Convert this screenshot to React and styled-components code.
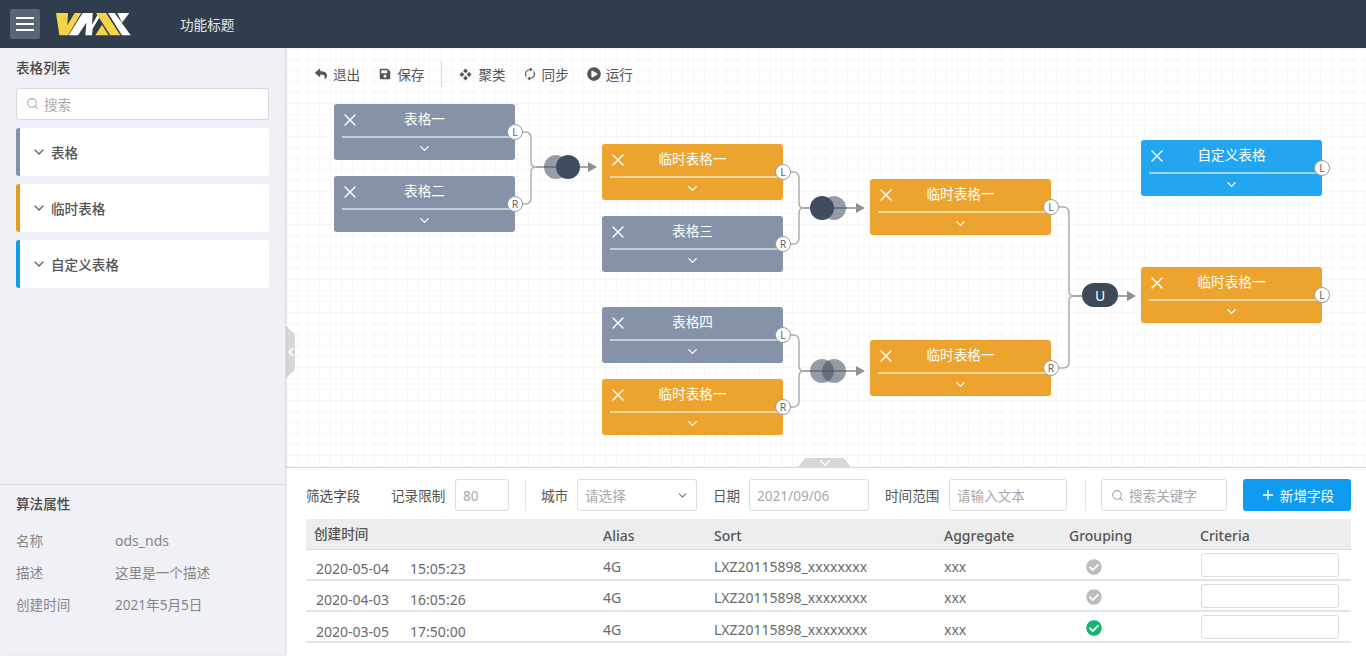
import React from 'react';
import styled, { createGlobalStyle } from 'styled-components';
import { ChevronDown, ChevronLeft, Plus, Search, X } from 'lucide-react';
import { FaCheckCircle, FaPlayCircle, FaReply, FaSave } from 'react-icons/fa';

const GlobalStyle = createGlobalStyle`
  html, body {
    margin: 0;
    padding: 0;
    background: #fff;
  }
  * {
    box-sizing: border-box;
  }
  body, input {
    font-family: 'Noto Sans', 'Noto Sans CJK SC', sans-serif;
    font-size: 13.6px;
    color: #555;
  }
`;

const Page = styled.div`
  width: 1366px;
  height: 656px;
  display: flex;
  flex-direction: column;
  overflow: hidden;
`;

/* top bar */
const TopBar = styled.header`
  height: 48px;
  flex: none;
  display: flex;
  align-items: center;
  padding-left: 10px;
  background-color: #303d4c;
  color: #fff;
`;

const MenuButton = styled.div`
  width: 30px;
  height: 30px;
  display: flex;
  flex-direction: column;
  align-items: center;
  justify-content: center;
  gap: 4px;
  border-radius: 2px;
  background-color: #5a6572;
  span {
    width: 18px;
    height: 2px;
    background-color: #fff;
  }
`;

const LogoSvg = styled.svg`
  width: 75px;
  height: 24px;
  margin-left: 16px;
`;

const PageTitle = styled.div`
  margin-left: 49px;
  color: #e8eaec;
`;

const Body = styled.div`
  flex: 1;
  display: flex;
  min-height: 0;
`;

/* left column */
const Sidebar = styled.aside`
  width: 286px;
  height: 606px;
  flex: none;
  display: flex;
  flex-direction: column;
  background-color: #f0f1f6;
  border-right: 1px solid #dedede;
  box-shadow: 0 1px 3px rgba(0, 0, 0, 0.14);
  z-index: 2;
`;

const TableList = styled.div`
  flex: 1;
  padding: 10px 16px 0;
`;

const SectionTitle = styled.div`
  height: 20px;
  line-height: 20px;
  font-weight: 500;
  color: #4a4a4a;
`;

const SideSearch = styled.div`
  height: 32px;
  margin: 10px 0 8px;
  display: flex;
  align-items: center;
  gap: 5px;
  padding: 0 0 1px 9px;
  background-color: #fff;
  border: 1px solid #d9d9d9;
  border-radius: 3px;
  color: #aaa;
`;

const Group = styled.div`
  height: 48px;
  margin-bottom: 8px;
  display: flex;
  align-items: center;
  gap: 4px;
  padding-left: 11px;
  background-color: #fff;
  border-left: 4px solid ${(p) => p.$color};
  border-radius: 3px;
  font-weight: 500;
  color: #555;
  svg {
    color: #666;
  }
`;

const Props = styled.div`
  height: 170px;
  flex: none;
  padding: 9px 16px 0;
  border-top: 1px solid #dcdcdc;
`;

const PropList = styled.div`
  margin-top: 10px;
`;

const PropRow = styled.div`
  height: 32px;
  display: flex;
  align-items: center;
  color: #868686;
`;

const PropName = styled.div`
  width: 99px;
`;

const LatinValue = styled.span`
  font-size: 14px;
`;

/* right column */
const Main = styled.main`
  flex: 1;
  min-width: 0;
  display: flex;
  flex-direction: column;
`;

const Canvas = styled.section`
  position: relative;
  height: 420px;
  flex: none;
  padding: 13px 0 0 29px;
  background-color: #fff;
  background-image:
    linear-gradient(#f7f7f8 1px, transparent 1px),
    linear-gradient(90deg, #f7f7f8 1px, transparent 1px);
  background-size: 11px 11px;
  border-bottom: 1px solid #dadada;
`;

const Toolbar = styled.div`
  display: flex;
  align-items: center;
  height: 26px;
  color: #555;
`;

const ToolButton = styled.div`
  display: flex;
  align-items: center;
  gap: ${(p) => p.$space || 6}px;
  margin-right: ${(p) => p.$gap}px;
  svg {
    color: #555;
    flex: none;
  }
`;

const ToolDivider = styled.div`
  width: 1px;
  height: 26px;
  margin-right: 17px;
  background-color: #dcdcdc;
`;

const Wires = styled.svg`
  position: absolute;
  left: 0;
  top: 0;
  width: 1080px;
  height: 419px;
  pointer-events: none;
`;

const NodeBox = styled.div`
  position: absolute;
  left: ${(p) => p.$x}px;
  top: ${(p) => p.$y}px;
  width: 181px;
  height: 56px;
  display: flex;
  flex-direction: column;
  background-color: ${(p) => p.$color};
  border-radius: 3px;
  color: #fff;
`;

const NodeHead = styled.div`
  position: relative;
  height: 34px;
  flex: none;
  margin-left: 8px;
  border-bottom: 2px solid rgba(255, 255, 255, 0.55);
  text-align: center;
  padding: 4px 8px 0 0;
  line-height: 22px;
`;

const NodeClose = styled(X)`
  position: absolute;
  left: -2px;
  top: 6px;
`;

const NodeFoot = styled.div`
  flex: 1;
  display: flex;
  align-items: center;
  justify-content: center;
  padding-bottom: 2px;
`;

const Port = styled.div`
  position: absolute;
  right: -8px;
  top: 20px;
  width: 16px;
  height: 16px;
  display: flex;
  align-items: center;
  justify-content: center;
  background-color: #fff;
  border: 1px solid #9a9a9a;
  border-radius: 50%;
  font-size: 10.5px;
  color: #666;
`;

const UnionPill = styled.div`
  position: absolute;
  left: 796px;
  top: 235px;
  width: 36px;
  height: 24px;
  display: flex;
  align-items: center;
  justify-content: center;
  background-color: #3b4959;
  border-radius: 12px;
  font-size: 14px;
  color: #fff;
`;

const SideHandle = styled.div`
  position: absolute;
  left: 0;
  top: 278px;
  width: 9px;
  height: 52px;
  display: flex;
  align-items: center;
  justify-content: center;
  background-color: #d8d8d8;
  clip-path: polygon(0 0, 100% 16%, 100% 84%, 0 100%);
  color: #fff;
  svg {
    flex: none;
  }
`;

const BottomHandle = styled.div`
  position: absolute;
  left: 512px;
  bottom: 0;
  width: 53px;
  height: 9px;
  display: flex;
  align-items: center;
  justify-content: center;
  background-color: #d8d8d8;
  clip-path: polygon(0 100%, 14% 0, 86% 0, 100% 100%);
  color: #fff;
`;

/* field panel */
const Panel = styled.section`
  flex: 1;
  padding: 11px 15px 0 20px;
  background-color: #fff;
`;

const FilterBar = styled.div`
  display: flex;
  align-items: center;
  height: 32px;
`;

const FilterTitle = styled.div`
  width: 85px;
  flex: none;
  color: #4a4a4a;
`;

const FilterLabel = styled.label`
  width: ${(p) => p.$w}px;
  flex: none;
  white-space: nowrap;
  color: #555;
`;

const Field = styled.input`
  width: ${(p) => p.$w}px;
  height: 32px;
  flex: none;
  padding: 0 7px;
  margin-right: ${(p) => p.$gap || 0}px;
  border: 1px solid #dcdcdc;
  border-radius: 3px;
  outline: none;
  &::placeholder {
    color: #a8a8a8;
    opacity: 1;
  }
`;

const SelectBox = styled.div`
  width: 120px;
  height: 32px;
  flex: none;
  margin-right: 16px;
  display: flex;
  align-items: center;
  justify-content: space-between;
  padding: 0 7px;
  border: 1px solid #dcdcdc;
  border-radius: 3px;
  color: #a8a8a8;
  svg {
    color: #777;
  }
`;

const FilterDivider = styled.div`
  width: 1px;
  height: 32px;
  flex: none;
  margin: 0 15px 0 16px;
  background-color: #e6e6e6;
`;

const SearchBox = styled.div`
  width: 126px;
  height: 32px;
  flex: none;
  margin-right: 16px;
  display: flex;
  align-items: center;
  gap: 5px;
  padding-left: 9px;
  border: 1px solid #dcdcdc;
  border-radius: 3px;
  color: #a8a8a8;
`;

const AddButton = styled.div`
  width: 108px;
  height: 32px;
  flex: none;
  display: flex;
  align-items: center;
  justify-content: center;
  gap: 4px;
  background-color: #0e9bf0;
  border-radius: 3px;
  color: #fff;
`;

const Grid = styled.div`
  margin-top: 8px;
`;

const columns = '289px 111px 230px 125px 131px 159px';

const HeadRow = styled.div`
  display: grid;
  grid-template-columns: ${columns};
  height: 31px;
  align-items: center;
  background-color: #ededed;
  border-bottom: 1px solid #dcdcdc;
  font-size: 14px;
  font-weight: 500;
  color: #555;
  > div {
    padding: 2px 0 0 8px;
  }
  > div:first-child {
    padding-top: 0;
    margin-top: -2px;
    font-size: 13.6px;
  }
`;

const Row = styled.div`
  display: grid;
  grid-template-columns: ${columns};
  height: 31px;
  align-items: center;
  border-bottom: 2px solid #e4e4e4;
  font-size: 14px;
  color: #6a6a6a;
`;

const TextCell = styled.div`
  padding: ${(p) => p.$top}px 0 0 8px;
`;

const DateCell = styled.div`
  display: flex;
  gap: 21px;
  padding: ${(p) => p.$top}px 0 0 10px;
`;

const CheckCell = styled.div`
  display: flex;
  padding: ${(p) => p.$top}px 0 0 25px;
  color: ${(p) => (p.$on ? '#12b76f' : '#bdbdbd')};
`;

const CriteriaCell = styled.div`
  padding-left: 9px;
`;

const CriteriaInput = styled.input`
  display: block;
  width: 138px;
  height: 24px;
  border: 1px solid #dcdcdc;
  border-radius: 3px;
  outline: none;
`;

const GRAY = '#8592a8';
const ORANGE = '#eda42e';
const BLUE = '#23a6f0';

const nodes = [
  { x: 48, y: 56, title: '表格一', color: GRAY, port: 'L' },
  { x: 48, y: 128, title: '表格二', color: GRAY, port: 'R' },
  { x: 316, y: 96, title: '临时表格一', color: ORANGE, port: 'L' },
  { x: 316, y: 168, title: '表格三', color: GRAY, port: 'R' },
  { x: 316, y: 259, title: '表格四', color: GRAY, port: 'L' },
  { x: 316, y: 331, title: '临时表格一', color: ORANGE, port: 'R' },
  { x: 584, y: 131, title: '临时表格一', color: ORANGE, port: 'L' },
  { x: 584, y: 292, title: '临时表格一', color: ORANGE, port: 'R' },
  { x: 855, y: 92, title: '自定义表格', color: BLUE, port: 'L' },
  { x: 855, y: 219, title: '临时表格一', color: ORANGE, port: 'L' },
];

// text sits a little lower in each row of the original, hence the per-row tops
const rows = [
  { date: '2020-05-04', time: '15:05:23', on: false, textTop: 4, dateTop: 8, checkTop: 5 },
  { date: '2020-04-03', time: '16:05:26', on: false, textTop: 4, dateTop: 8, checkTop: 2 },
  { date: '2020-03-05', time: '17:50:00', on: true, textTop: 6, dateTop: 9, checkTop: 2 },
];

const Node = ({ x, y, title, color, port }) => (
  <NodeBox $x={x} $y={y} $color={color}>
    <NodeHead>
      <NodeClose size={20} strokeWidth={1.6} />
      {title}
    </NodeHead>
    <NodeFoot>
      <ChevronDown size={15} strokeWidth={2} />
    </NodeFoot>
    <Port>{port}</Port>
  </NodeBox>
);

// two outputs joined into one arrow, in canvas coordinates
const Join = ({ x, top, bottom, mid, end, reach = 10 }) => (
  <g fill="none">
    <path
      d={`M${x} ${top} h${reach} q6 0 6 6 V${mid - 5} q0 5 5 5 M${x} ${bottom} h${reach} q6 0 6 -6 V${mid + 5} q0 -5 5 -5`}
      stroke="#aeaeae"
      strokeWidth="1.5"
    />
    <path d={`M${x + reach + 11} ${mid} H${end - 8}`} stroke="#8a8a8a" strokeWidth="1.5" />
    <path d={`M${end - 9} ${mid - 5} L${end} ${mid} L${end - 9} ${mid + 5} Z`} fill="#8f8f8f" />
  </g>
);

const ClusterIcon = () => (
  <svg width="13" height="13" viewBox="0 0 14 14" fill="#555">
    <path d="M7 0.5 L9.6 3.1 L7 5.7 L4.4 3.1 Z" />
    <path d="M7 8.3 L9.6 10.9 L7 13.5 L4.4 10.9 Z" />
    <path d="M3.1 4.4 L5.7 7 L3.1 9.6 L0.5 7 Z" />
    <path d="M10.9 4.4 L13.5 7 L10.9 9.6 L8.3 7 Z" />
  </svg>
);

const SyncIcon = () => (
  <svg width="12" height="14" viewBox="0 0 12 14">
    <path d="M6 2.5 A4.5 4.5 0 0 0 2.4 9.7 M6 11.5 A4.5 4.5 0 0 0 9.6 4.3" fill="none" stroke="#555" strokeWidth="1.2" />
    <path d="M6 0.4 L8.8 2.5 L6 4.6 Z M6 9.4 L3.2 11.5 L6 13.6 Z" fill="#555" />
  </svg>
);

const Logo = () => (
  <LogoSvg viewBox="12 10 225 72">
    <path d="M12 13 H48 L46 50 L68 13 H88 L48 80 H22 Z" fill="#f4d44a" />
    <path d="M50 80 L92 13 H122 L120 48 L140 13 H150 L122 60 L120 80 H100 L103 42 L78 80 Z" fill="#fff" />
    <path d="M130 80 L150 48 L165 72 L170 80 Z" fill="#f4d44a" />
    <path d="M132 13 H162 L205 80 H175 Z" fill="#f4d44a" />
    <path d="M168 13 H188 L236 80 H210 Z" fill="#fff" />
    <path d="M196 13 H232 L210 42 Z" fill="#fff" />
  </LogoSvg>
);

const App = () => (
  <Page>
    <GlobalStyle />
    <TopBar>
      <MenuButton>
        <span />
        <span />
        <span />
      </MenuButton>
      <Logo />
      <PageTitle>功能标题</PageTitle>
    </TopBar>
    <Body>
      <Sidebar>
        <TableList>
          <SectionTitle>表格列表</SectionTitle>
          <SideSearch>
            <Search size={13} />
            搜索
          </SideSearch>
          <Group $color={GRAY}>
            <ChevronDown size={16} />
            表格
          </Group>
          <Group $color="#ea9a1e">
            <ChevronDown size={16} />
            临时表格
          </Group>
          <Group $color="#0e9bf0">
            <ChevronDown size={16} />
            自定义表格
          </Group>
        </TableList>
        <Props>
          <SectionTitle>算法属性</SectionTitle>
          <PropList>
            <PropRow>
              <PropName>名称</PropName>
              <LatinValue>ods_nds</LatinValue>
            </PropRow>
            <PropRow>
              <PropName>描述</PropName>
              这里是一个描述
            </PropRow>
            <PropRow>
              <PropName>创建时间</PropName>
              2021年5月5日
            </PropRow>
          </PropList>
        </Props>
      </Sidebar>
      <Main>
        <Canvas>
          <Toolbar>
            <ToolButton $gap={19}>
              <FaReply size={12} />
              退出
            </ToolButton>
            <ToolButton $gap={17}>
              <FaSave size={12} />
              保存
            </ToolButton>
            <ToolDivider />
            <ToolButton $gap={18}>
              <ClusterIcon />
              聚类
            </ToolButton>
            <ToolButton $gap={18}>
              <SyncIcon />
              同步
            </ToolButton>
            <ToolButton $gap={0} $space={5}>
              <FaPlayCircle size={14} />
              运行
            </ToolButton>
          </Toolbar>
          <Wires viewBox="0 0 1080 419">
            <Join x={229} top={84} bottom={156} mid={119} end={311} />
            <circle cx="270" cy="119" r="12" fill="#3f4d5e" opacity="0.55" />
            <circle cx="282" cy="119" r="12" fill="#3f4d5e" />
            <Join x={497} top={124} bottom={196} mid={160} end={579} />
            <circle cx="548" cy="160" r="12" fill="#3f4d5e" opacity="0.55" />
            <circle cx="536" cy="160" r="12" fill="#3f4d5e" />
            <Join x={497} top={287} bottom={359} mid={323} end={579} />
            <circle cx="536" cy="323" r="12" fill="#3f4d5e" opacity="0.55" />
            <circle cx="548" cy="323" r="12" fill="#3f4d5e" opacity="0.55" />
            <Join x={765} top={159} bottom={320} mid={248} end={850} reach={12} />
          </Wires>
          {nodes.map((n) => (
            <Node key={`${n.x}-${n.y}`} {...n} />
          ))}
          <UnionPill>U</UnionPill>
          <SideHandle>
            <ChevronLeft size={14} strokeWidth={3} />
          </SideHandle>
          <BottomHandle>
            <ChevronDown size={18} strokeWidth={2} />
          </BottomHandle>
        </Canvas>
        <Panel>
          <FilterBar>
            <FilterTitle>筛选字段</FilterTitle>
            <FilterLabel $w={64}>记录限制</FilterLabel>
            <Field $w={54} placeholder="80" />
            <FilterDivider />
            <FilterLabel $w={36}>城市</FilterLabel>
            <SelectBox>
              请选择
              <ChevronDown size={13} />
            </SelectBox>
            <FilterLabel $w={36}>日期</FilterLabel>
            <Field $w={120} $gap={16} placeholder="2021/09/06" />
            <FilterLabel $w={64}>时间范围</FilterLabel>
            <Field $w={118} $gap={2} placeholder="请输入文本" />
            <FilterDivider />
            <SearchBox>
              <Search size={13} />
              搜索关键字
            </SearchBox>
            <AddButton>
              <Plus size={16} />
              新增字段
            </AddButton>
          </FilterBar>
          <Grid>
            <HeadRow>
              <div>创建时间</div>
              <div>Alias</div>
              <div>Sort</div>
              <div>Aggregate</div>
              <div>Grouping</div>
              <div>Criteria</div>
            </HeadRow>
            {rows.map((r) => (
              <Row key={r.date}>
                <DateCell $top={r.dateTop}>
                  <span>{r.date}</span>
                  <span>{r.time}</span>
                </DateCell>
                <TextCell $top={r.textTop}>4G</TextCell>
                <TextCell $top={r.textTop}>LXZ20115898_xxxxxxxx</TextCell>
                <TextCell $top={r.textTop}>xxx</TextCell>
                <CheckCell $on={r.on} $top={r.checkTop}>
                  <FaCheckCircle size={16} />
                </CheckCell>
                <CriteriaCell>
                  <CriteriaInput />
                </CriteriaCell>
              </Row>
            ))}
          </Grid>
        </Panel>
      </Main>
    </Body>
  </Page>
);

export default App;
